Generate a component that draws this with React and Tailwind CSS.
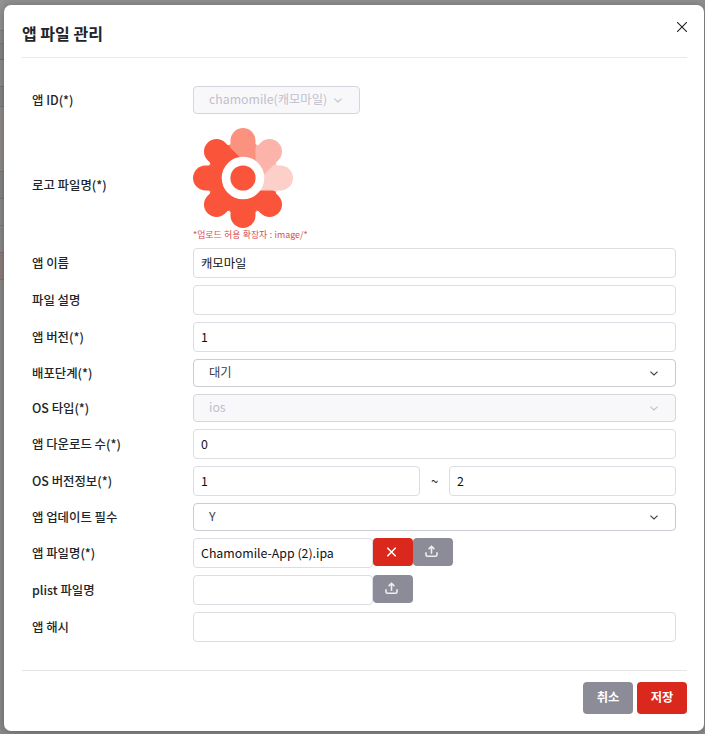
import React from "react";

const PETALS = [
  { angle: 135, color: "#fa543a" },
  { angle: 90, color: "#fdcfc9" },
  { angle: 45, color: "#fcb4aa" },
  { angle: 0, color: "#fb917f" },
  { angle: -45, color: "#fa543a" },
  { angle: -90, color: "#fa543a" },
  { angle: -135, color: "#fa543a" },
  { angle: 180, color: "#fa543a" },
];

function Logo() {
  return (
    <svg width="100" height="100" viewBox="-50 -50 100 100" className="block">
      {PETALS.map((p) => (
        <path key={p.angle} d="M0 0L-13.8 -33.3A36 36 0 0 1 13.8 -33.3Z" fill={p.color} transform={`rotate(${p.angle})`} />
      ))}
      {PETALS.map((p) => (
        <path key={p.angle} d="M0 0V-37.5" stroke={p.color} strokeWidth="25" strokeLinecap="round" transform={`rotate(${p.angle})`} />
      ))}
      <circle r="21.3" fill="#fff" />
      <circle r="12.6" fill="#fa543a" />
    </svg>
  );
}

function Chevron() {
  return (
    <svg width="8" height="5" viewBox="0 0 8 5" className="block shrink-0" fill="none" stroke="currentColor" strokeWidth="1.1">
      <path d="M0.4 0.6L4 4L7.6 0.6" />
    </svg>
  );
}

function UploadIcon() {
  return (
    <svg width="13" height="13" viewBox="0 0 13 13" className="block" fill="none" stroke="#fff" strokeWidth="1.6" strokeOpacity="0.85" strokeLinecap="round" strokeLinejoin="round">
      <path d="M6.5 8.3V1.4M4.1 3.6L6.5 1.2L8.9 3.6M1 7.9V9.8Q1 11.3 2.5 11.3H10.5Q12 11.3 12 9.8V7.9" />
    </svg>
  );
}

function Row({ label, children }) {
  return (
    <div className="flex items-center">
      <div className="w-[161px] shrink-0 text-[12.4px] font-medium leading-[18px] text-[#212529]">{label}</div>
      {children}
    </div>
  );
}

function Field({ value = "", width = "w-[483px]" }) {
  return (
    <div className={`${width} flex h-[30px] shrink-0 items-center rounded-[4px] border border-[#dcdce2] bg-white px-[7px] text-[12.35px] leading-[18px] text-[#111]`}>
      {value}
    </div>
  );
}

function Select({ value, width = "w-[483px]", disabled = false, tone = disabled ? "border-[#d5d5dd] bg-[#f8f8fb] text-[#bfbfcb]" : "border-[#cbcbd3] bg-white text-[#3b3e44]" }) {
  return (
    <div className={`${width} ${tone} flex h-7 items-center justify-between rounded-[4px] border pl-[15px] pr-[17px] text-[12.3px] leading-[18px]`}>
      <span className="relative -top-px">{value}</span>
      <Chevron />
    </div>
  );
}

const cap = "flex h-7 w-10 items-center justify-center rounded-[4px] pr-[3px] pb-px";

export default function App() {
  return (
    <div className="relative h-[734px] w-[705px] overflow-hidden bg-[#8e8e8e] font-['Noto_Sans_CJK_KR',sans-serif]">
      <div className="flex h-full w-1 flex-col bg-[#8b8a89]">
        <div className="h-[31px] border-b border-[#7f7f7f] bg-[#929292]" />
        <div className="h-[13px] border-b border-[#7b7b7b]" />
        <div className="h-4 border-b border-[#6f6f6f] bg-[#858585]" />
        <div className="h-[27px] border-b border-[#777] bg-[#8f8d8b]" />
        <div className="h-5 border-b border-[#777] bg-[#858585]" />
        <div className="h-[65px] border-b border-[#777] bg-[#8f8c8a]" />
        <div className="h-[27px] border-b border-[#777] bg-[#858585]" />
        <div className="h-[27px] border-b border-[#7c7c7c]" />
        <div className="h-[27px] border-b border-[#7c7474]" />
        <div className="h-[27px] border-b border-[#7c7474] bg-[#8f7d7d]" />
      </div>
      <section className="absolute left-1 top-[4.5px] flex h-[726px] w-[700px] flex-col rounded-[7px] bg-white pl-[18px] pr-[17px] shadow-[0_2px_8px_rgba(0,0,0,0.3)]">
        <header className="flex h-[53px] shrink-0 items-center justify-between border-b border-[#e9e9ec] pt-[5px]">
          <h1 className="text-[16px] font-bold leading-[22px] text-[#212529]">앱 파일 관리</h1>
          <svg width="10" height="10" viewBox="0 0 10 10" className="mb-3" stroke="#222" strokeWidth="1.1">
            <path d="M0 0L10 10M10 0L0 10" />
          </svg>
        </header>
        <main className="flex flex-col gap-[7px] pl-[10px] pt-[28.5px]">
          <Row label="앱 ID(*)">
            <Select width="w-[167px]" disabled value="chamomile(캐모마일)" />
          </Row>
          <div className="pt-[6.5px]">
            <Row label={<span className="block pt-0.5">로고 파일명(*)</span>}>
              <div className="h-[113.5px]">
                <Logo />
                <p className="text-[8.9px] leading-[13px] text-[#dc4c4c] [word-spacing:0.4px]">*업로드 허용 확장자 : image/*</p>
              </div>
            </Row>
          </div>
          <Row label="앱 이름"><Field value="캐모마일" /></Row>
          <Row label="파일 설명"><Field /></Row>
          <Row label="앱 버전(*)"><Field value="1" /></Row>
          <Row label="배포단계(*)"><Select value="대기" /></Row>
          <Row label="OS 타입(*)"><Select value="ios" disabled /></Row>
          <Row label="앱 다운로드 수(*)"><Field value="0" /></Row>
          <Row label="OS 버전정보(*)">
            <Field value="1" width="w-[227px]" />
            <span className="w-[29px] text-center text-[13px] leading-[18px] text-[#212529]">~</span>
            <Field value="2" width="w-[227px]" />
          </Row>
          <Row label="앱 업데이트 필수"><Select value="Y" /></Row>
          <Row label="앱 파일명(*)">
            <Field value="Chamomile-App (2).ipa" width="w-[180px]" />
            <div className="flex h-[30px] items-start">
              <div className={`${cap} bg-[#da291c]`}>
                <svg width="9" height="10" viewBox="0 0 9 10" stroke="#fff" strokeWidth="1.5"><path d="M0.3 0.8L8.7 9.2M8.7 0.8L0.3 9.2" /></svg>
              </div>
              <div className={`${cap} bg-[#8c8c99]`}><UploadIcon /></div>
            </div>
          </Row>
          <Row label="plist 파일명">
            <Field width="w-[180px]" />
            <div className="flex h-[30px] items-start">
              <div className={`${cap} bg-[#8c8c99]`}><UploadIcon /></div>
            </div>
          </Row>
          <Row label="앱 해시"><Field /></Row>
        </main>
        <footer className="mt-[27.5px] flex justify-end gap-1 border-t border-[#e4e4e9] pt-[11px]">
          <button className="h-8 w-[50px] rounded-[4px] bg-[#8c8c99] text-[12.3px] font-bold text-white">취소</button>
          <button className="h-8 w-[50px] rounded-[4px] bg-[#da291c] text-[12.3px] font-bold text-white">저장</button>
        </footer>
      </section>
    </div>
  );
}
